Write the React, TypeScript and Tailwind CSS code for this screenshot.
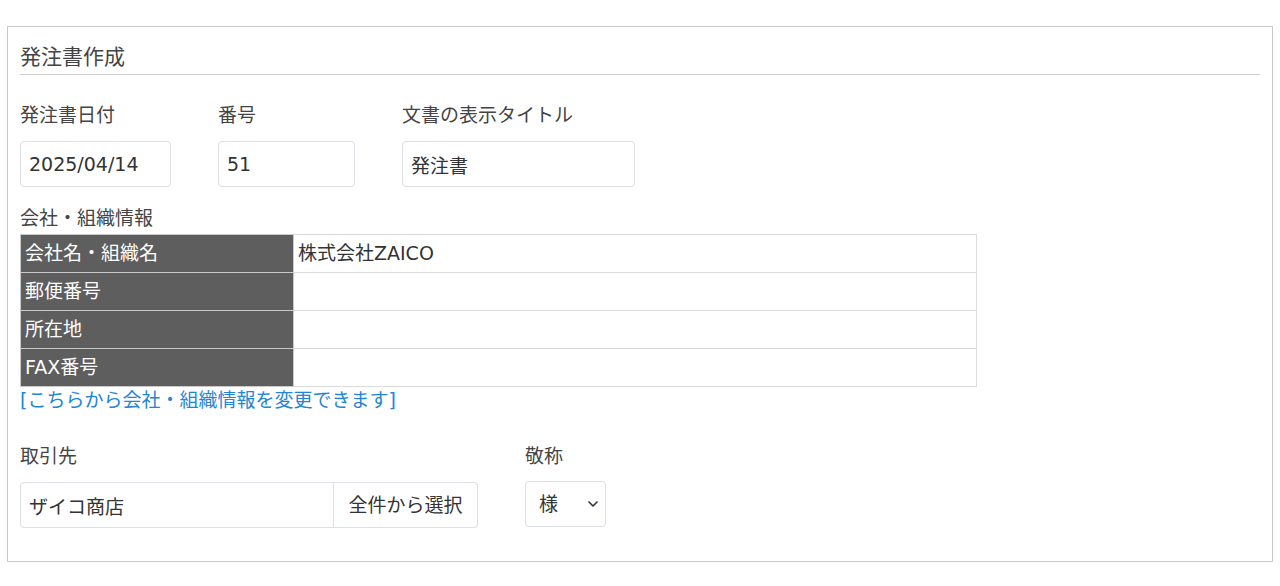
import { ChevronDown } from 'lucide-react';

const font = { fontFamily: '"DejaVu Sans", "Noto Sans CJK JP", sans-serif' };

function Field({ label, value, width, className = '' }: { label: string; value: string; width: string; className?: string }) {
  return (
    <div className={`flex flex-col ${className}`}>
      <label className="text-[19px] leading-[26px] text-[#444]">{label}</label>
      <input
        readOnly
        value={value}
        className={`mt-[13px] h-[46px] ${width} rounded-[4px] border border-[#dcdfe3] bg-white px-[8px] text-[19px] text-[#333] outline-none`}
      />
    </div>
  );
}

const companyRows = [
  { label: '会社名・組織名', value: '株式会社ZAICO' },
  { label: '郵便番号', value: '' },
  { label: '所在地', value: '' },
  { label: 'FAX番号', value: '' },
];

export default function App() {
  return (
    <div className="bg-white px-[7px] pt-[26px]" style={font}>
      <div className="h-[536px] border border-[#c8c8c8] px-[12px] pt-[15px]">
        {/* Heading */}
        <h2 className="border-b border-[#d0d0d0] pb-[2px] text-[21px] leading-[30px] text-[#444]">発注書作成</h2>

        {/* Date / number / title */}
        <div className="mt-[27px] flex">
          <Field label="発注書日付" value="2025/04/14" width="w-[151px]" />
          <Field label="番号" value="51" width="w-[137px]" className="ml-[47px]" />
          <Field label="文書の表示タイトル" value="発注書" width="w-[233px]" className="ml-[47px]" />
        </div>

        {/* Company info */}
        <div className="mt-[18px] text-[19px] leading-[26px] text-[#444]">会社・組織情報</div>
        <table className="mt-[3px] w-[957px] border-collapse text-[19px]">
          <tbody>
            {companyRows.map((row) => (
              <tr key={row.label} className="h-[38px]">
                <th className="w-[273px] border border-[#c9c9c9] bg-[#5e5e5e] px-[4px] text-left font-normal text-white">
                  {row.label}
                </th>
                <td className="border border-[#dcdcdc] px-[4px] text-[#333]">{row.value}</td>
              </tr>
            ))}
          </tbody>
        </table>
        <a className="block text-[19px] leading-[26px] text-[#2385d6]">[こちらから会社・組織情報を変更できます]</a>

        {/* Supplier */}
        <div className="mt-[30px] flex">
          <div className="flex flex-col">
            <label className="text-[19px] leading-[26px] text-[#444]">取引先</label>
            <div className="mt-[13px] flex">
              <input
                readOnly
                value="ザイコ商店"
                className="h-[46px] w-[314px] rounded-l-[4px] border border-[#dcdfe3] px-[8px] text-[19px] text-[#333] outline-none"
              />
              <button className="h-[46px] w-[144px] rounded-r-[4px] border border-l-0 border-[#dcdfe3] bg-white text-[19px] text-[#333]">
                全件から選択
              </button>
            </div>
          </div>
          <div className="ml-[47px] flex flex-col">
            <label className="text-[19px] leading-[26px] text-[#444]">敬称</label>
            <div className="relative mt-[12px] h-[46px] w-[81px]">
              <select className="h-full w-full appearance-none rounded-[4px] border border-[#dcdfe3] bg-white pl-[13px] text-[19px] text-[#333] outline-none">
                <option>様</option>
              </select>
              <ChevronDown className="pointer-events-none absolute right-[5px] top-[15px] h-[16px] w-[16px] text-[#333]" strokeWidth={2.5} />
            </div>
          </div>
        </div>
      </div>
    </div>
  );
}
